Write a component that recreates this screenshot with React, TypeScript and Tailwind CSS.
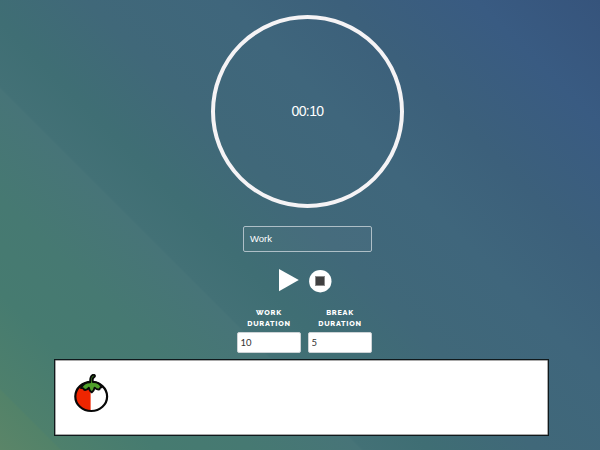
import { useState } from "react";

function Duration({ first, value }: { first: string; value: string }) {
  const [minutes, setMinutes] = useState(value);
  return (
    <label className="flex w-16 flex-col items-center">
      <span className="text-center font-['Raleway','Lato',sans-serif] text-[7.25px] leading-[10.5px] font-extrabold tracking-[0.75px] text-white uppercase">
        {first}
        <br />
        Duration
      </span>
      <input
        className="mt-[3px] h-[21px] w-16 rounded-[2px] border border-[#cdd3d6] bg-white px-[2.5px] font-['Lato',sans-serif] text-[9.5px] leading-4 text-[#333] outline-none"
        value={minutes}
        onChange={(e) => setMinutes(e.target.value)}
      />
    </label>
  );
}

function Tomato() {
  return (
    <svg className="h-[40px] w-[36px]" viewBox="0 0 36 40" fill="none">
      <ellipse cx="18.2" cy="22.4" rx="15.9" ry="14.6" fill="#fff" />
      <path d="M17.6 7.8C8.8 8 2.3 14.400 2.3 22.400s6.5 14.4 15.3 14.6Z" fill="#ef2500" />
      <ellipse cx="18.2" cy="22.4" rx="15.9" ry="14.6" stroke="#080808" strokeWidth="2.2" />
      <path
        d="M17.2 8.2c-.2-3.5.4-6 2-7 1.5-.9 3-.2 2.7 1-.2.9-1.5 1-1.9 2.2-.4 1.2-.4 2.3-.1 3.6 3.900-.2 7.400 1.900 8.700 5.400-1.100-.1-1.800.7-2.200 2-1.900.4-3.600-.4-4.800-1.700-.3 1.900-1.100 3.500-2.900 4.700-1.800-1.200-2.600-2.800-2.900-4.700-1 1.700-2.500 2.500-4.400 2.200-.5-1.600-1.400-2.200-3.400-1.900 1.800-3.900 5.300-5.800 9.200-5.800Z"
        fill="#50a12b"
        stroke="#080808"
        strokeWidth="1.9"
        strokeLinejoin="round"
      />
    </svg>
  );
}

export default function App() {
  return (
    <div className="flex h-[450px] w-[600px] flex-col overflow-hidden bg-[linear-gradient(45deg,#5b8568_0%,#528269_5.7%,#4e806c_5.9%,#467b70_15%,#467972_24%,#477478_34.4%,#437176_34.6%,#3f6e74_41%,#406879_51%,#3f667c_64%,#3c607b_75%,#395b82_88%,#36547c_100%)]">
      <main className="ml-[15px] flex flex-col items-center pt-[15px]">
        <div className="flex h-[193px] w-[193px] items-center justify-center rounded-full border-4 border-[#f5f3f5] pb-0.5">
          <span className="font-['Liberation_Sans',sans-serif] text-[14px] leading-4 tracking-[-0.6px] text-white">00:10</span>
        </div>
        <div className="mt-[18px] flex h-[26px] w-[129px] items-center rounded-[2px] border border-[#aebfc7] bg-white/3 px-1.5 pb-px font-['Liberation_Sans',sans-serif] text-[9.5px] leading-3 text-white">
          Work
        </div>
        <div className="mt-[17px] mr-[5px] flex h-6 items-start gap-[10px]">
          <button aria-label="Start">
            <svg className="block h-[23px] w-5" viewBox="0 0 20 23">
              <path d="M0 0 19.8 11 0 22.3Z" fill="#fff" />
            </svg>
          </button>
          <button aria-label="Stop">
            <svg className="mt-px block h-[23px] w-[23px]" viewBox="0 0 23 23">
              <circle cx="11.3" cy="11.2" r="11.2" fill="#fff" />
              <rect x="6.5" y="6.5" width="9" height="9" fill="#404040" stroke="#8c8c8c" />
            </svg>
          </button>
        </div>
        <div className="mt-[15px] mr-[6px] flex gap-[7px]">
          <Duration first="Work" value="10" />
          <Duration first="Break" value="5" />
        </div>
      </main>
      <section className="mt-[6px] ml-[54px] h-[77px] w-[495px] border border-[#10191c] bg-white pt-[14px] pl-[18px] shadow-[inset_0_0_0_0.5px_#555]">
        <Tomato />
      </section>
    </div>
  );
}
